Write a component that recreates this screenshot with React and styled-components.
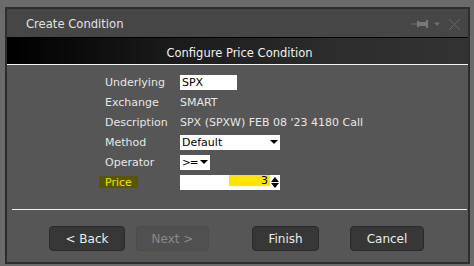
import React from "react";
import styled, { createGlobalStyle } from "styled-components";

const Global = createGlobalStyle`
  html, body { margin: 0; padding: 0; background: #6b6b6b; }
  body { font-family: "DejaVu Sans", Verdana, sans-serif; }
  * { box-sizing: border-box; }
`;

const Window = styled.div`
  margin: 7px 4px 0 5px;
  height: 257px;
  border: 2px solid #2e2e2e;
  background: #565656;
  display: flex;
  flex-direction: column;
`;

const TitleBar = styled.div`
  height: 28px;
  background: #464646;
  display: flex;
  align-items: center;
  padding: 2px 7px 0 19px;
  color: #e2e2e2;
  font-size: 11.6px;
  font-family: "DejaVu Sans", sans-serif;
`;

const Title = styled.div`
  flex: 1;
`;

const TitleIcons = styled.div`
  display: flex;
  align-items: center;
`;

const Header = styled.div`
  height: 28px;
  border-top: 1px solid #000;
  border-bottom: 1px solid #f4f4f4;
  background: linear-gradient(90deg, #000 0%, #1a1a1a 35%, #2c2c2c 70%, #333 100%);
  display: flex;
  align-items: center;
  justify-content: center;
  color: #f0f0f0;
  font-size: 11.5px;
  padding: 3px 0 0 4px;
`;

const Form = styled.div`
  display: grid;
  grid-template-columns: 74px auto;
  grid-auto-rows: 20px;
  align-items: center;
  padding: 7px 0 0 98px;
  font-size: 11px;
  color: #e6e6e6;
`;

const Label = styled.div`
  justify-self: start;
  padding: 1px 6px 0 ${(p) => (p.$hl ? "6px" : "0")};
  margin-left: ${(p) => (p.$hl ? "-6px" : "0")};
  height: ${(p) => (p.$hl ? "12px" : "auto")};
  line-height: ${(p) => (p.$hl ? "11px" : "normal")};
  background: ${(p) => (p.$hl ? "#5a5600" : "transparent")};
  color: ${(p) => (p.$hl ? "#e8e400" : "#e6e6e6")};
`;

const Value = styled.div`
  padding-left: 1px;
  white-space: nowrap;
`;

const TextBox = styled.div`
  width: ${(p) => p.$w}px;
  height: 15px;
  background: #fff;
  color: #000;
  padding: 1px 2px 1px 2px;
  line-height: 13px;
  display: flex;
  align-items: center;
  justify-content: space-between;
`;

const BoxText = styled.span`
  letter-spacing: ${(p) => p.$ls || 0}px;
  font-size: ${(p) => p.$fs || 11}px;
`;

const Arrow = styled.span`
  width: 0;
  height: 0;
  border-left: 4px solid transparent;
  border-right: 4px solid transparent;
  border-top: 4px solid #000;
`;

const PriceBox = styled.div`
  width: 100px;
  height: 15px;
  background: #fff;
  display: flex;
  align-items: flex-start;
  justify-content: flex-end;
  padding-right: 1px;
`;

const YellowField = styled.div`
  width: 41px;
  height: 11px;
  background: #ffe400;
  color: #000;
  text-align: right;
  line-height: 12px;
  padding-right: 2px;
`;

const Spinner = styled.div`
  width: 9px;
  height: 15px;
  display: flex;
  flex-direction: column;
  align-items: center;
  justify-content: center;
  gap: 1px;
`;

const Up = styled.span`
  width: 0;
  height: 0;
  border-left: 4px solid transparent;
  border-right: 4px solid transparent;
  border-bottom: 5px solid #000;
`;

const Down = styled.span`
  width: 0;
  height: 0;
  border-left: 4px solid transparent;
  border-right: 4px solid transparent;
  border-top: 5px solid #000;
`;

const Separator = styled.div`
  height: 1px;
  background: #f0f0f0;
  margin: 17px 1px 0 5px;
`;

const ButtonRow = styled.div`
  display: flex;
  padding: 16px 0 0 42px;
`;

const Button = styled.div`
  width: ${(p) => p.$w}px;
  margin-left: ${(p) => p.$ml || 0}px;
  height: 25px;
  border-radius: 4px;
  border: 1px solid ${(p) => (p.$disabled ? "#4c4c4c" : "#2a2a2a")};
  background: ${(p) => (p.$disabled ? "#505050" : "#373737")};
  color: ${(p) => (p.$disabled ? "#8a8a8a" : "#ececec")};
  font-size: 12px;
  display: flex;
  align-items: center;
  justify-content: center;
  font-family: "DejaVu Sans", sans-serif;
`;

const IconSlot = styled.span`
  display: flex;
  margin-left: ${(p) => p.$ml || 0}px;
`;

const PinIcon = () => (
  <svg width="19" height="10" viewBox="0 0 19 10">
    <rect x="0" y="4.5" width="6" height="1" fill="#6a6a6a" />
    <rect x="6" y="2" width="2" height="6" fill="#777" />
    <rect x="8" y="3" width="7" height="4" fill="#777" />
    <rect x="15" y="1" width="2" height="8" fill="#777" />
  </svg>
);

const TriIcon = () => (
  <svg width="6" height="5" viewBox="0 0 6 5">
    <path d="M0 0.5 L6 0.5 L3 4 Z" fill="#707070" />
  </svg>
);

const CloseIcon = () => (
  <svg width="13" height="13" viewBox="0 0 13 13">
    <path d="M1 1 L12 12 M12 1 L1 12" stroke="#666" strokeWidth="1" />
  </svg>
);

export default function App() {
  return (
    <>
      <Global />
      <Window>
        <TitleBar>
          <Title>Create Condition</Title>
          <TitleIcons>
            <IconSlot>
              <PinIcon />
            </IconSlot>
            <IconSlot $ml={4}>
              <TriIcon />
            </IconSlot>
            <IconSlot $ml={8}>
              <CloseIcon />
            </IconSlot>
          </TitleIcons>
        </TitleBar>
        <Header>Configure Price Condition</Header>
        <Form>
          <Label>Underlying</Label>
          <Value>
            <TextBox $w={57}>SPX</TextBox>
          </Value>
          <Label>Exchange</Label>
          <Value>SMART</Value>
          <Label>Description</Label>
          <Value>SPX (SPXW) FEB 08 '23 4180 Call</Value>
          <Label>Method</Label>
          <Value>
            <TextBox $w={100}>
              <BoxText>Default</BoxText>
              <Arrow />
            </TextBox>
          </Value>
          <Label>Operator</Label>
          <Value>
            <TextBox $w={30}>
              <BoxText $ls={-1} $fs={10.5}>&gt;=</BoxText>
              <Arrow />
            </TextBox>
          </Value>
          <Label $hl>Price</Label>
          <Value>
            <PriceBox>
              <YellowField>3</YellowField>
              <Spinner>
                <Up />
                <Down />
              </Spinner>
            </PriceBox>
          </Value>
        </Form>
        <Separator />
        <ButtonRow>
          <Button $w={76}>&lt; Back</Button>
          <Button $w={73} $ml={11} $disabled>
            Next &gt;
          </Button>
          <Button $w={67} $ml={43}>
            Finish
          </Button>
          <Button $w={74} $ml={31}>
            Cancel
          </Button>
        </ButtonRow>
      </Window>
    </>
  );
}
